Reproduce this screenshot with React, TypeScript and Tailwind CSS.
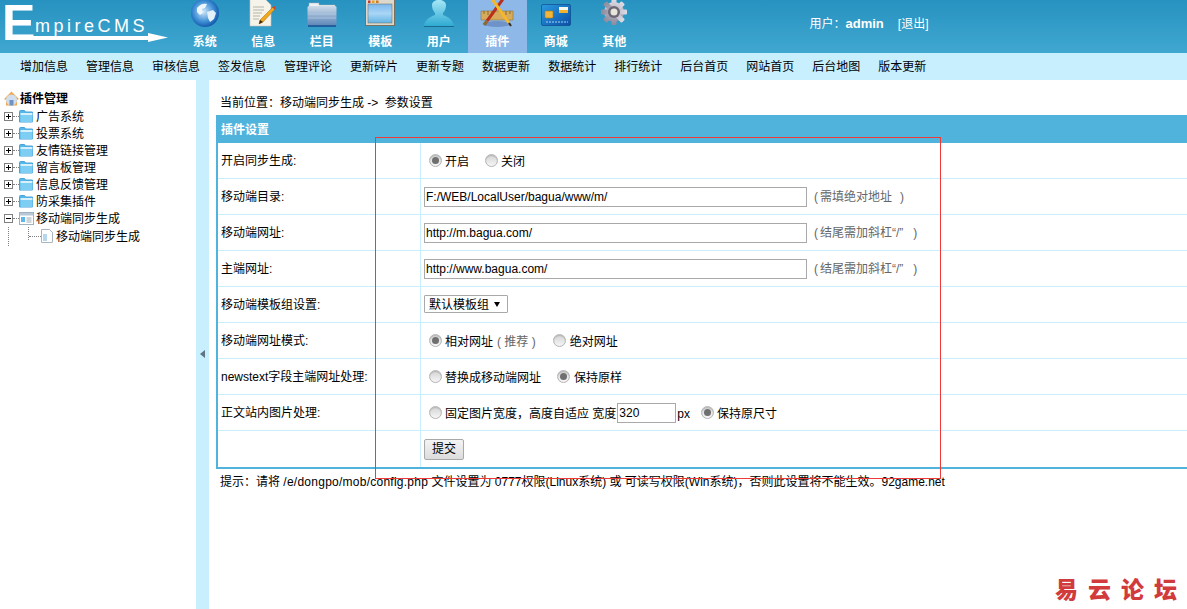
import React from 'react';

const font = { fontFamily: '"Liberation Sans", "Noto Sans CJK SC", sans-serif' };

const subMenu = ['增加信息', '管理信息', '审核信息', '签发信息', '管理评论', '更新碎片', '更新专题', '数据更新', '数据统计', '排行统计', '后台首页', '网站首页', '后台地图', '版本更新'];

const treeItems = ['广告系统', '投票系统', '友情链接管理', '留言板管理', '信息反馈管理', '防采集插件'];

function GlobeIcon() {
  return (
    <svg width="28" height="28" viewBox="0 0 28 28">
      <defs>
        <radialGradient id="globe" cx="0.45" cy="0.45" r="0.6">
          <stop offset="0" stopColor="#cfe8f8" />
          <stop offset="0.6" stopColor="#3f8fd6" />
          <stop offset="1" stopColor="#0c4fa3" />
        </radialGradient>
      </defs>
      <circle cx="14" cy="14" r="14" fill="url(#globe)" />
      <path d="M6 9c3-4 7-5 10-4l-2 4-3 1 1 4-3 2-3-3z" fill="#eef6fb" />
      <path d="M16 13l6-2 3 3-2 6-4 3-2-4z" fill="#e4f1fa" />
    </svg>
  );
}

function PageIcon() {
  return (
    <svg width="28" height="28" viewBox="0 0 28 28">
      <path d="M1 0h15l6 6v21H1z" fill="#f6f3ea" stroke="#c9c5b8" strokeWidth="0.6" />
      <path d="M4 8h11M4 11h11M4 14h9M4 17h7M4 20h6" stroke="#a5a59b" strokeWidth="0.8" />
      <path d="M25 7l2 2-13 14-4 2 1-4z" fill="#f2a81d" stroke="#a8660c" strokeWidth="0.5" />
      <path d="M25 7l2 2-1.500 1.500-2-2z" fill="#c9403a" />
      <path d="M10 25l1-4 3 2z" fill="#3a2a14" />
    </svg>
  );
}

function FolderIcon() {
  return (
    <svg width="30" height="25" viewBox="0 0 30 25">
      <defs>
        <linearGradient id="fold" x1="0" y1="0" x2="0" y2="1">
          <stop offset="0" stopColor="#cfdcea" />
          <stop offset="0.5" stopColor="#90aed0" />
          <stop offset="1" stopColor="#5d86b8" />
        </linearGradient>
      </defs>
      <path d="M2 6V1h10v2h16v3z" fill="#eef1f3" stroke="#a3adb6" strokeWidth="0.5" />
      <rect x="0.500" y="4" width="29" height="20" rx="1.500" fill="url(#fold)" />
      <path d="M1 8h28M1 12h28M1 16h28" stroke="#b9cce0" strokeWidth="0.7" />
      <path d="M1 24h28" stroke="#174f92" strokeWidth="1.500" />
    </svg>
  );
}

function WindowIcon() {
  return (
    <svg width="30" height="28" viewBox="0 0 30 28">
      <defs>
        <linearGradient id="win" x1="0" y1="0" x2="0" y2="1">
          <stop offset="0" stopColor="#7cb8ee" />
          <stop offset="0.5" stopColor="#a9d6f6" />
          <stop offset="1" stopColor="#63b4e4" />
        </linearGradient>
      </defs>
      <rect x="0.500" y="0.500" width="29" height="26" fill="#ddd8cc" stroke="#77705e" />
      <rect x="3" y="5" width="24" height="19" fill="url(#win)" stroke="#6a6a60" strokeWidth="0.5" />
      <rect x="3" y="1.500" width="2.500" height="2.500" fill="#c53a2a" />
      <rect x="7" y="1.500" width="2.500" height="2.500" fill="#e2a01c" />
      <rect x="11" y="1.500" width="2.500" height="2.500" fill="#d07a1c" />
    </svg>
  );
}

function UserIcon() {
  return (
    <svg width="30" height="27" viewBox="0 0 30 27">
      <defs>
        <linearGradient id="usr" x1="0" y1="0" x2="0" y2="1">
          <stop offset="0" stopColor="#a6e6f5" />
          <stop offset="1" stopColor="#2aa8d2" />
        </linearGradient>
      </defs>
      <path d="M0 27c0-7 6-10 11-12v-2c-2-2-3-5-3-8 0-3 3-5 7-5s7 2 7 5c0 3-1 6-3 8v2c5 2 11 5 11 12z" fill="url(#usr)" />
      <path d="M0 26h30v1H0z" fill="#1a6c8f" />
    </svg>
  );
}

function ToolsIcon() {
  return (
    <svg width="34" height="28" viewBox="0 0 34 28">
      <ellipse cx="17" cy="25" rx="13" ry="3" fill="#6f93c8" />
      <path d="M1 12h32v9H1z" fill="#d6ac5c" stroke="#8a6a2a" strokeWidth="0.5" />
      <path d="M4 12v3M8 12v4M12 12v3M22 12v3M26 12v4M30 12v3" stroke="#6e5220" strokeWidth="0.7" />
      <path d="M23 0L7 22" stroke="#b8301c" strokeWidth="3" />
      <path d="M7 22l-3 4" stroke="#8c6a34" strokeWidth="3.500" />
      <path d="M12 0L29 24" stroke="#f5b82a" strokeWidth="3" />
      <path d="M29 24l2 3" stroke="#3a2a14" strokeWidth="2" />
    </svg>
  );
}

function CardIcon() {
  return (
    <svg width="30" height="23" viewBox="0 0 30 23">
      <defs>
        <linearGradient id="card" x1="0" y1="0" x2="1" y2="1">
          <stop offset="0" stopColor="#2b9be0" />
          <stop offset="1" stopColor="#0b4fa8" />
        </linearGradient>
      </defs>
      <rect x="0.500" y="0.500" width="29" height="21" rx="1.500" fill="url(#card)" stroke="#0a3f85" strokeWidth="0.6" />
      <rect x="18" y="3" width="9" height="3" fill="#f7f7f0" />
      <rect x="18" y="6" width="9" height="3" fill="#f3b32a" />
      <rect x="4" y="7" width="8" height="7" rx="1" fill="#f0b53a" stroke="#b07c12" strokeWidth="0.6" />
      <path d="M5 18h22" stroke="#a8d4f2" strokeWidth="1" strokeDasharray="2 1" />
    </svg>
  );
}

function GearIcon() {
  return (
    <svg width="28" height="28" viewBox="0 0 28 28">
      <defs>
        <linearGradient id="gear" x1="0" y1="0" x2="0" y2="1">
          <stop offset="0" stopColor="#dedce4" />
          <stop offset="1" stopColor="#8d8b9c" />
        </linearGradient>
      </defs>
      <g fill="url(#gear)">
        <circle cx="14" cy="13" r="10" />
        <rect x="11.500" y="0" width="5" height="26" rx="1" />
        <rect x="11.500" y="0" width="5" height="26" rx="1" transform="rotate(45 14 13)" />
        <rect x="11.500" y="0" width="5" height="26" rx="1" transform="rotate(90 14 13)" />
        <rect x="11.500" y="0" width="5" height="26" rx="1" transform="rotate(135 14 13)" />
      </g>
      <circle cx="14" cy="13" r="6" fill="#6a6878" />
      <circle cx="14" cy="13" r="3.500" fill="#e8e6d8" />
    </svg>
  );
}

const navItems = [
  { label: '系统', icon: <GlobeIcon /> },
  { label: '信息', icon: <PageIcon /> },
  { label: '栏目', icon: <FolderIcon /> },
  { label: '模板', icon: <WindowIcon /> },
  { label: '用户', icon: <UserIcon /> },
  { label: '插件', icon: <ToolsIcon />, active: true },
  { label: '商城', icon: <CardIcon /> },
  { label: '其他', icon: <GearIcon /> },
];

function Logo() {
  return (
    <div className="relative h-[53px] w-[175.500px] shrink-0 text-white">
      <span className="absolute left-[2px] top-0 text-[50px] font-bold leading-[46px]" style={font}>E</span>
      <span className="absolute left-[35px] top-[16px] text-[18px] leading-[20px] tracking-[3.500px]" style={font}>mpireCMS</span>
      <svg className="absolute left-0 top-0" width="176" height="53" viewBox="0 0 176 53">
        <path d="M6 36h142v-3l20 4.500-20 4.500v-2H6z" fill="#fff" />
      </svg>
    </div>
  );
}

function TreeFolder() {
  return (
    <svg width="15" height="13" viewBox="0 0 15 13" className="shrink-0">
      <path d="M0.500 1.500a1 1 0 0 1 1-1h4l1 1.500h7v10h-13z" fill="#55b8ec" stroke="#4aa2d8" />
      <rect x="1.500" y="3" width="12" height="2" fill="#d6f0fc" />
      <rect x="1.500" y="5" width="12" height="7" fill="#7ecdf3" />
    </svg>
  );
}

function Expander({ open }: { open?: boolean }) {
  return (
    <span className="relative flex h-[9px] w-[9px] shrink-0 items-center justify-center border border-[#808080] bg-white">
      <span className="h-px w-[5px] bg-black" />
      {!open && <span className="absolute h-[5px] w-px bg-black" />}
    </span>
  );
}

function TreeRow({ label, open, last }: { label: string; open?: boolean; last?: boolean }) {
  return (
    <div className="flex h-[17px] items-center pl-[4px]">
      <Expander open={open} />
      <span className="w-[6px] shrink-0 border-t border-dotted border-[#808080]" />
      {last ? (
        <svg width="15" height="13" viewBox="0 0 15 13" className="shrink-0">
          <rect x="0.500" y="0.500" width="14" height="12" fill="#fff" stroke="#9fb2c2" />
          <rect x="1" y="1" width="13" height="2.500" fill="#b8c8d6" />
          <rect x="2" y="5" width="4" height="5" fill="#5db7e8" />
          <path d="M7.500 6h5M7.500 8h5M7.500 10h5" stroke="#9aa8b4" />
        </svg>
      ) : (
        <TreeFolder />
      )}
      <span className="ml-[2px] whitespace-nowrap">{label}</span>
    </div>
  );
}

function Sidebar() {
  return (
    <aside className="w-[196px] shrink-0 pt-[10px] text-[12px] text-black">
      <div className="mb-[1px] flex h-[17px] items-center gap-px pl-[4px] font-bold">
        <svg width="15" height="15" viewBox="0 0 15 15" className="shrink-0">
          <path d="M7.500 0.500L15 8l-2 1v5.500H2V9L0 8z" fill="#f0a850" />
          <circle cx="7.500" cy="9" r="5.500" fill="#cfdff0" />
          <rect x="5.500" y="9" width="4" height="5.500" fill="#6f94c2" />
        </svg>
        <span>插件管理</span>
      </div>
      {treeItems.map((t) => (
        <TreeRow key={t} label={t} />
      ))}
      <TreeRow label="移动端同步生成" open last />
      <div className="flex h-[19px] pl-[8px]">
        <span className="h-full w-0 border-l border-dotted border-[#808080]" />
        <span className="ml-[19px] h-[13px] w-0 border-l border-dotted border-[#808080]" />
        <span className="mt-[9px] h-0 w-[12px] shrink-0 border-t border-dotted border-[#808080]" />
        <svg width="12" height="14" viewBox="0 0 12 14" className="mt-[2px] shrink-0">
          <path d="M0.500 0.500h8l3 3v10h-11z" fill="#fff" stroke="#a8b4be" />
          <rect x="2" y="5" width="4" height="7" fill="#b5d8ee" />
        </svg>
        <span className="ml-[3px] self-center whitespace-nowrap">移动端同步生成</span>
      </div>
    </aside>
  );
}

function Radio({ checked }: { checked?: boolean }) {
  return (
    <span className="flex h-[13px] w-[13px] shrink-0 -translate-y-[2px] items-center justify-center rounded-full border border-[#b4b4b4] bg-gradient-to-b from-[#d4d4d4] to-[#f6f6f6] shadow-[inset_0_1px_1px_rgba(0,0,0,0.15)]">
      {checked && <span className="h-[7px] w-[7px] rounded-full bg-[#6f6f6f]" />}
    </span>
  );
}

function Option({ checked, className, children }: { checked?: boolean; className: string; children: React.ReactNode }) {
  return (
    <span className={`flex items-center pt-[3px] ${className}`}>
      <Radio checked={checked} />
      {children}
    </span>
  );
}

function Row({ label, children, last }: { label?: string; children: React.ReactNode; last?: boolean }) {
  return (
    <div className={`flex ${last ? 'h-[36px]' : 'h-[36px] border-b border-[#c8effe]'}`}>
      <div className="flex w-[203px] shrink-0 items-center border-r border-[#c8effe] pl-[3px]">{label}</div>
      <div className="flex min-w-0 flex-1 items-center whitespace-nowrap pl-[3px]">{children}</div>
    </div>
  );
}

function UrlInput({ value, hint, gap }: { value: string; hint: string; gap: string }) {
  return (
    <>
      <input
        readOnly
        value={value}
        className="h-[20px] w-[383px] border border-[#a9a9a9] bg-white px-[1px] text-[12px] text-black outline-none"
        style={font}
      />
      <span className="ml-[7px] flex text-[#666]">
        <span>(</span>
        <span className="ml-[2px]">{hint}</span>
        <span className={gap}>)</span>
      </span>
    </>
  );
}

function MainPanel() {
  return (
    <main className="min-w-0 flex-1 pl-[7px] text-[12px] text-black">
      <div className="flex h-[35px] items-end whitespace-pre pb-[3px] pl-[4px]">
        当前位置：移动端同步生成 -&gt; <span className="ml-[3px]">参数设置</span>
      </div>
      <div className="w-[1100px] border-2 border-[#4fb3dc]">
        <div className="flex h-[26px] items-center bg-[#4fb3dc] pl-[3px] font-bold text-white">插件设置</div>
        <Row label="开启同步生成:">
          <Option checked className="ml-[5px] gap-[3px]">开启</Option>
          <Option className="ml-[16px] gap-[3px]">关闭</Option>
        </Row>
        <Row label="移动端目录:">
          <UrlInput value="F:/WEB/LocalUser/bagua/www/m/" hint="需填绝对地址" gap="ml-[8px]" />
        </Row>
        <Row label="移动端网址:">
          <UrlInput value="http://m.bagua.com/" hint="结尾需加斜杠“/”" gap="ml-[10px]" />
        </Row>
        <Row label="主端网址:">
          <UrlInput value="http://www.bagua.com/" hint="结尾需加斜杠“/”" gap="ml-[10px]" />
        </Row>
        <Row label="移动端模板组设置:">
          <span className="mb-[1px] flex h-[18px] w-[84px] items-center justify-between rounded-[1px] border border-[#a9a9a9] bg-white pl-[4px] pr-[7px] pt-[1px]">
            默认模板组
            <span className="h-0 w-0 border-x-[3px] border-t-[5px] border-x-transparent border-t-black" />
          </span>
        </Row>
        <Row label="移动端网址模式:">
          <Option checked className="ml-[5px] gap-[3px]">
            相对网址
            <span className="-ml-[3px] pl-[4px] text-[#666]">( 推荐 )</span>
          </Option>
          <Option className="ml-[17px] gap-[4px]">绝对网址</Option>
        </Row>
        <Row label="newstext字段主端网址处理:">
          <Option className="ml-[5px] gap-[3px]">替换成移动端网址</Option>
          <Option checked className="ml-[16px] gap-[4px]">保持原样</Option>
        </Row>
        <Row label="正文站内图片处理:">
          <Option className="ml-[5px] gap-[3px]">固定图片宽度，高度自适应 宽度</Option>
          <input
            readOnly
            value="320"
            className="ml-[1px] h-[20px] w-[59px] border border-[#a9a9a9] bg-white px-[1px] text-[12px] text-black outline-none"
            style={font}
          />
          <span className="ml-[1px] pt-[2px]">px</span>
          <Option checked className="ml-[11px] gap-[3px]">保持原尺寸</Option>
        </Row>
        <Row last>
          <button className="h-[21px] w-[40px] rounded-[2px] border border-[#a9a9a9] bg-gradient-to-b from-[#f4f4f4] to-[#dcdcdc] text-[12px] text-black">
            提交
          </button>
        </Row>
      </div>
      <p className="whitespace-nowrap pl-[4px] pt-[4px]">
        提示：请将 <span className="tracking-[0.250px]">/e/dongpo/mob/config.php</span> 文件设置为 0777权限(Linux系统) 或 可读写权限(Win系统)，否则此设置将不能生效。92game.net
      </p>
    </main>
  );
}

export default function App() {
  return (
    <div className="relative h-[609px] w-[1187px] overflow-hidden bg-white" style={font}>
      <header className="flex h-[53px] bg-gradient-to-b from-[#2792c0] to-[#3fa7d0] text-white">
        <Logo />
        <nav className="flex">
          {navItems.map((item) => (
            <div
              key={item.label}
              className={`flex h-[53px] w-[58.500px] flex-col items-center justify-end overflow-hidden pb-[5px] ${item.active ? 'bg-[#8db8e8]' : ''}`}
            >
              <div className="flex h-[36px] items-end justify-center pb-[9px]">{item.icon}</div>
              <span className="text-[12px] font-bold leading-[12px]">{item.label}</span>
            </div>
          ))}
        </nav>
        <div className="ml-[166px] flex h-[48px] items-center gap-[14px] whitespace-nowrap text-[12px]">
          <span>用户：<b className="text-[13px]">admin</b></span>
          <span>[退出]</span>
        </div>
      </header>

      <div className="flex h-[27px] items-center gap-[18px] bg-[#c8effe] pl-[20px] text-[12px] text-black">
        {subMenu.map((m) => (
          <span key={m} className="whitespace-nowrap">{m}</span>
        ))}
      </div>

      <div className="flex h-[529px]">
        <Sidebar />
        <div className="flex w-[13px] shrink-0 items-center justify-center bg-[#c8effe] pt-[19px]">
          <span className="h-0 w-0 border-y-[4px] border-r-[5px] border-y-transparent border-r-[#5f7480]" />
        </div>
        <MainPanel />
      </div>

      {/* hand-drawn annotation over the page */}
      <div className="pointer-events-none absolute left-[375px] top-[137px] h-[342px] w-[566px] border border-[#f03a3a]" />
      <div
        className="pointer-events-none absolute left-[1055px] top-[574px] whitespace-nowrap text-[23px] font-black leading-[28px] tracking-[10px] text-[#d23b3b]"
        style={{ fontFamily: '"Noto Sans CJK SC", sans-serif' }}
      >
        易云论坛
      </div>
    </div>
  );
}
